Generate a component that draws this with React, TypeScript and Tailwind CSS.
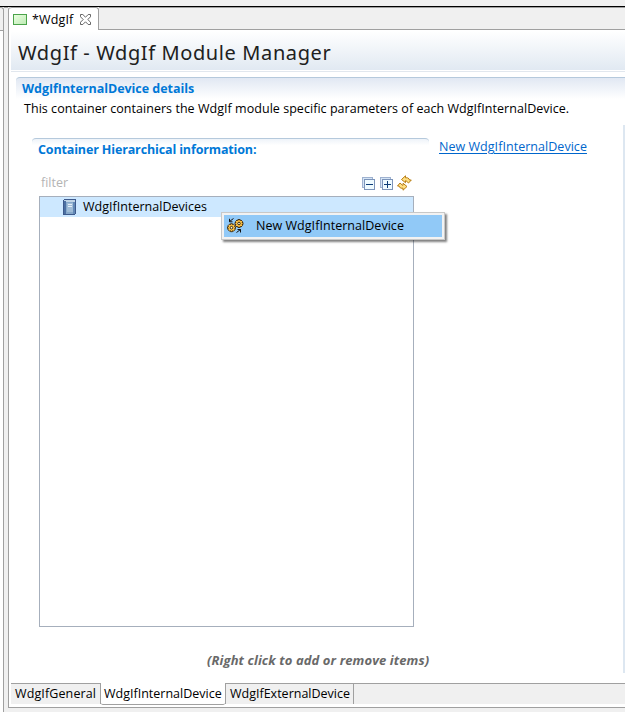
import React from "react";

const ui = "font-['Open_Sans','Noto_Sans_CJK_SC',sans-serif]";

function BookIcon() {
  return (
    <svg width="14" height="16" viewBox="0 0 14 16" shapeRendering="crispEdges">
      <path d="M1 0h12v1H1zM0 1h1v14H0zM0 15h12v1H0zM12 1h1v14h-1z" fill="#3d5a8c" />
      <path d="M1 1h11v14H1z" fill="#86a8ca" />
      <path d="M1 1h11v2H1z" fill="#c0d4e6" />
      <path d="M1 2h2v13H1z" fill="#4c70a3" />
      <path d="M4 4h6v9H4z" fill="#9fbcd7" />
      <path d="M5 5h4v1H5zM5 7h4v1H5z" fill="#e4eef7" />
      <path d="M10 3h2v12h-2z" fill="#6389b6" />
    </svg>
  );
}

function TreeToggleIcon({ plus = false }: { plus?: boolean }) {
  return (
    <svg width="13" height="13" viewBox="0 0 13 13" shapeRendering="crispEdges">
      <path d="M.5 .5h10v10H.5z" fill="#d5e5f6" stroke="#9fb2d0" />
      <path d="M2.500 2.500h10v10h-10z" fill="#eefaff" stroke="#7c94ba" />
      <path d={plus ? "M4 7h7v1H4zM7 4h1v7H7z" : "M4 7h7v1H4z"} fill="#0c3c78" />
    </svg>
  );
}

function RefreshIcon() {
  return (
    <svg width="15" height="16" viewBox="0 0 15 16">
      <path d="M4.500 4.500 8.500.8v2h2l1.500 1 .5 1.200h1.800L11.500 8 9 5.700h-.5v2z" fill="#ffe083" stroke="#b77c14" strokeWidth="1" />
      <path d="M10 11.500 6 15.200v-2H4l-1.500-1L2 11H.5L3 8l2.500 2.300H6v-2z" fill="#ffe083" stroke="#b77c14" strokeWidth="1" />
    </svg>
  );
}

function Gear({ x, y }: { x: number; y: number }) {
  return (
    <g transform={`translate(${x} ${y})`}>
      <path d="M-1-4H1V-3L2-3.500 3.500-2 3-1H4V1H3L3.500 2 2 3.500 1 3V4H-1V3L-2 3.500-3.500 2-3 1H-4V-1H-3L-3.500-2-2-3.500-1-3z" fill="#ffc445" stroke="#3a270c" strokeWidth=".9" />
      <circle r="1.300" fill="#fff8d8" stroke="#20180c" strokeWidth=".9" />
    </g>
  );
}

function GearsIcon() {
  return (
    <svg className="shrink-0" width="17" height="16" viewBox="0 0 17 16">
      <Gear x={12} y={5.5} />
      <Gear x={4.5} y={9.7} />
      <path d="M6.500 .5 2.500 3.500M2.500 .8v3h3M9.500 14.500l4-3M10.500 11.500h3v3" fill="none" stroke="#111" strokeWidth="1" />
    </svg>
  );
}

function CloseIcon() {
  return (
    <svg width="11" height="11" viewBox="0 0 11 11">
      <path d="M.5.5h2.300l2.700 2.700L8.200.5h2.300v2.300L7.800 5.500l2.700 2.700v2.300H8.200L5.500 7.800l-2.700 2.700H.5V8.200l2.700-2.700L.5 2.800z" fill="#fff" stroke="#555" strokeWidth=".9" />
    </svg>
  );
}

function EditorTab() {
  return (
    <div className="flex h-[23px] shrink-0">
      <div className="flex w-[90px] items-center rounded-t-[3px] border-r border-t border-[#a0a0a0] bg-white pl-1">
        <span className="mt-px h-[11px] w-[14px] shrink-0 border border-[#4ba34b] bg-gradient-to-br from-[#e9ffe0] to-[#bfeab5]" />
        <span className="ml-[5px] mt-px w-[48px] shrink-0 text-[12.500px] leading-[20px] tracking-[0.150px]">*WdgIf</span>
        <CloseIcon />
      </div>
      <div className="grow border-b border-t border-[#a0a0a0] bg-[#f0f0f0]" />
    </div>
  );
}

function ContextMenu() {
  return (
    <div className="absolute left-[181px] top-[15px] h-[28px] w-[224px] border border-[#c8c8c8] bg-[#f2f2f2] p-[2px] shadow-[2px_2px_2px_rgba(0,0,0,0.5)]">
      <div className="flex h-full items-center bg-[#91c9f7] pl-[3px]">
        <GearsIcon />
        <span className="ml-[12px] whitespace-nowrap text-[12.500px] tracking-[0.040px]">New WdgIfInternalDevice</span>
      </div>
    </div>
  );
}

export default function App() {
  return (
    <div className={`flex h-[712px] w-[625px] flex-col overflow-hidden bg-[#f0f0f0] text-black ${ui}`}>
      <div className="h-[7px] shrink-0 border-b border-black" />
      <div className="flex min-h-0 grow">
        <div className="w-1 shrink-0 rounded-tr-[3px] border-r border-t border-[#a0a0a0]">
          <div className="h-[23px] border-b border-[#a0a0a0]" />
          <div className="h-[681px] bg-white" />
        </div>
        <div className="w-1 shrink-0 border-t border-[#a0a0a0]" />
        <div className="flex min-w-0 grow flex-col">
          <div className="flex h-[701px] shrink-0 flex-col rounded-tl-[3px] border-b border-l border-[#a0a0a0] bg-white">
            <EditorTab />
            <header className="ml-[2px] mt-px h-[39px] shrink-0 bg-gradient-to-b from-white to-[#e1e9f2] pl-[7px]">
              <h1 className="whitespace-nowrap font-['Noto_Sans',sans-serif] text-[20px] leading-[44px] tracking-[0.610px] text-[#202020]">WdgIf - WdgIf Module Manager</h1>
            </header>
            <div className="ml-[2px] mt-px h-px shrink-0 bg-[#e1e7ee]" />
            <div className="ml-[7px] mt-[5px] flex h-[606px] shrink-0">
              <main className="w-[607px] shrink-0">
                <div className="h-[22px] rounded-tl-[4px] border-t border-[#b5c9dc] bg-gradient-to-b from-[#e1e8f3] to-white pl-[6px]">
                  <h2 className="whitespace-nowrap text-[12.500px] font-bold leading-[22px] tracking-[-0.040px] text-[#0078d7]">WdgIfInternalDevice details</h2>
                </div>
                <p className="h-[39px] whitespace-nowrap pl-2 text-[12.500px] leading-[20px] tracking-[0.038px]">This container containers the WdgIf module specific parameters of each WdgIfInternalDevice.</p>
                <div className="flex pl-4">
                  <section className="w-[397px]">
                    <div className="h-[22px] rounded-t-[4px] border-t border-[#b5c9dc] bg-gradient-to-b from-[#eef3f9] via-white via-30% to-white pl-[6px]">
                      <h3 className="whitespace-nowrap text-[12.500px] font-bold leading-[22px] tracking-[-0.140px] text-[#0078d7]">Container Hierarchical information:</h3>
                    </div>
                    <div className="flex h-9 items-center pl-[9px] pt-[9px]">
                      <span className="w-[321px] text-[12.500px] leading-[20px] text-[#b4b4b4]">filter</span>
                      <div className="flex items-center pt-px">
                        <TreeToggleIcon />
                        <span className="ml-[5px] mr-[4px]"><TreeToggleIcon plus /></span>
                        <RefreshIcon />
                      </div>
                    </div>
                    <div className="relative ml-[7px] h-[431px] w-[375px] border border-[#a6afbc]">
                      <div className="flex h-5 items-center bg-[#cde8ff] pl-[23px]">
                        <BookIcon />
                        <span className="ml-[6px] text-[12.500px] tracking-[0.020px]">WdgIfInternalDevices</span>
                      </div>
                      <ContextMenu />
                    </div>
                    <p className="mt-[23px] whitespace-nowrap pl-[175px] text-[13px] font-bold italic leading-[20px] tracking-[0.110px] text-[#696969]">(Right click to add or remove items)</p>
                  </section>
                  <a href="#" className="ml-[10px] h-[20px] whitespace-nowrap text-[12.500px] leading-[17px] tracking-[0.040px] text-[#0066cc] underline underline-offset-2">New WdgIfInternalDevice</a>
                </div>
              </main>
              <div className="flex grow flex-col">
                <div className="h-[22px] border-t border-[#b5c9dc] bg-gradient-to-b from-[#e1e8f3] to-white" />
                <div className="mt-[26px] h-[548px] bg-[#dde7f1]" />
              </div>
            </div>
            <nav className="ml-[2px] flex h-[22px] shrink-0 text-[12.500px] leading-[20px]">
              <div className="mb-px w-[90px] border-r border-t border-[#a0a0a0] bg-[#f0f0f0] pl-1 tracking-[0.120px]">WdgIfGeneral</div>
              <div className="w-[124px] rounded-b-[2px] border-b border-[#a0a0a0] bg-white pl-[3px] pt-px">WdgIfInternalDevice</div>
              <div className="mb-px w-[129px] border-x border-t border-[#a0a0a0] bg-[#f0f0f0] pl-1">WdgIfExternalDevice</div>
              <div className="mb-px grow border-t border-[#a0a0a0] bg-[#f0f0f0]" />
            </nav>
          </div>
        </div>
      </div>
    </div>
  );
}
